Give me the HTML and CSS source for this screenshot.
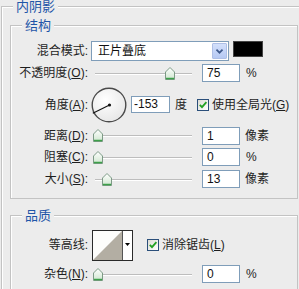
FILE: index.html
```html
<!DOCTYPE html>
<html>
<head>
<meta charset="utf-8">
<link rel="stylesheet" href="styles.css">
</head>
<body>
<div class="group outer">
  <div class="gtitle"><span>内阴影</span></div>

  <div class="group inner struct">
    <div class="gtitle"><span>结构</span></div>
    <div class="rows">
      <div class="row r-blend">
        <div class="lbl"><span>混合模式:</span></div>
        <div class="select">
          <span class="sel-text">正片叠底</span>
          <span class="sel-btn"><svg width="15" height="18" viewBox="0 0 15 18"><polyline points="4,7.5 7.5,11 11,7.5" fill="none" stroke="#3f5a8c" stroke-width="2"/></svg></span>
        </div>
        <div class="swatch"></div>
      </div>

      <div class="row r-std">
        <div class="lbl"><span>不透明度(<u>O</u>):</span></div>
        <div class="slider"><div class="track"></div><svg class="thumb" style="left:70px" width="10" height="13" viewBox="0 0 10 13"><defs><linearGradient id="tg1" x1="0" y1="0" x2="0" y2="1"><stop offset="0" stop-color="#ffffff"/><stop offset="1" stop-color="#cfe6cf"/></linearGradient></defs><path d="M5 0.5 L9.5 5 V12.5 H0.5 V5 Z" fill="url(#tg1)" stroke="#7d9a86"/><line x1="1" y1="11.5" x2="9" y2="11.5" stroke="#3da04a" stroke-width="1.5"/></svg></div>
        <div class="num">75</div>
        <div class="unit">%</div>
      </div>

      <div class="row r-angle">
        <div class="lbl"><span>角度(<u>A</u>):</span></div>
        <svg class="dial" width="36" height="36" viewBox="0 0 36 36"><defs><radialGradient id="dg" cx="0.4" cy="0.35" r="0.7"><stop offset="0" stop-color="#ffffff"/><stop offset="1" stop-color="#e6e6e6"/></radialGradient></defs><circle cx="18" cy="18" r="16.8" fill="url(#dg)" stroke="#4a4a4a" stroke-width="1.4"/><line x1="18.5" y1="18" x2="1.8" y2="26.2" stroke="#111" stroke-width="1.1"/><circle cx="18.5" cy="18" r="1.6" fill="#111"/></svg>
        <div class="num num-angle">-153</div>
        <div class="unit unit-deg">度</div>
        <span class="cb"><svg width="10" height="10" viewBox="0 0 10 10"><polyline points="1.8,4.8 4,7.2 8.4,2.2" fill="none" stroke="#22a022" stroke-width="1.8"/></svg></span>
        <span class="cb-text">使用全局光(<u>G</u>)</span>
      </div>

      <div class="row r-dist">
        <div class="lbl"><span>距离(<u>D</u>):</span></div>
        <div class="slider"><div class="track"></div><svg class="thumb" style="left:-2px" width="10" height="13" viewBox="0 0 10 13"><defs><linearGradient id="tg2" x1="0" y1="0" x2="0" y2="1"><stop offset="0" stop-color="#ffffff"/><stop offset="1" stop-color="#cfe6cf"/></linearGradient></defs><path d="M5 0.5 L9.5 5 V12.5 H0.5 V5 Z" fill="url(#tg2)" stroke="#7d9a86"/><line x1="1" y1="11.5" x2="9" y2="11.5" stroke="#3da04a" stroke-width="1.5"/></svg></div>
        <div class="num">1</div>
        <div class="unit unit-px">像素</div>
      </div>

      <div class="row r-std">
        <div class="lbl"><span>阻塞(<u>C</u>):</span></div>
        <div class="slider"><div class="track"></div><svg class="thumb" style="left:-2px" width="10" height="13" viewBox="0 0 10 13"><defs><linearGradient id="tg3" x1="0" y1="0" x2="0" y2="1"><stop offset="0" stop-color="#ffffff"/><stop offset="1" stop-color="#cfe6cf"/></linearGradient></defs><path d="M5 0.5 L9.5 5 V12.5 H0.5 V5 Z" fill="url(#tg3)" stroke="#7d9a86"/><line x1="1" y1="11.5" x2="9" y2="11.5" stroke="#3da04a" stroke-width="1.5"/></svg></div>
        <div class="num">0</div>
        <div class="unit">%</div>
      </div>

      <div class="row r-std">
        <div class="lbl"><span>大小(<u>S</u>):</span></div>
        <div class="slider"><div class="track"></div><svg class="thumb" style="left:7px" width="10" height="13" viewBox="0 0 10 13"><defs><linearGradient id="tg4" x1="0" y1="0" x2="0" y2="1"><stop offset="0" stop-color="#ffffff"/><stop offset="1" stop-color="#cfe6cf"/></linearGradient></defs><path d="M5 0.5 L9.5 5 V12.5 H0.5 V5 Z" fill="url(#tg4)" stroke="#7d9a86"/><line x1="1" y1="11.5" x2="9" y2="11.5" stroke="#3da04a" stroke-width="1.5"/></svg></div>
        <div class="num">13</div>
        <div class="unit unit-px">像素</div>
      </div>
    </div>
  </div>

  <div class="group inner quality">
    <div class="gtitle"><span>品质</span></div>
    <div class="rows rows-q">
      <div class="row r-contour">
        <div class="lbl"><span>等高线:</span></div>
        <div class="contour">
          <svg class="cswatch" width="29" height="29" viewBox="0 0 29 29"><rect x="0" y="0" width="29" height="29" fill="#fdfdfb"/><polygon points="0,29 29,0 29,29" fill="#b3aea3"/></svg>
          <span class="cbtn"><svg width="9" height="29" viewBox="0 0 9 29"><polygon points="2,12 7,12 4.5,15" fill="#000"/></svg></span>
        </div>
        <span class="cb cb-q"><svg width="10" height="10" viewBox="0 0 10 10"><polyline points="1.8,4.8 4,7.2 8.4,2.2" fill="none" stroke="#22a022" stroke-width="1.8"/></svg></span>
        <span class="cb-text">消除锯齿(<u>L</u>)</span>
      </div>

      <div class="row r-noise">
        <div class="lbl"><span>杂色(<u>N</u>):</span></div>
        <div class="slider"><div class="track"></div><svg class="thumb" style="left:-2px" width="10" height="13" viewBox="0 0 10 13"><defs><linearGradient id="tg5" x1="0" y1="0" x2="0" y2="1"><stop offset="0" stop-color="#ffffff"/><stop offset="1" stop-color="#cfe6cf"/></linearGradient></defs><path d="M5 0.5 L9.5 5 V12.5 H0.5 V5 Z" fill="url(#tg5)" stroke="#7d9a86"/><line x1="1" y1="11.5" x2="9" y2="11.5" stroke="#3da04a" stroke-width="1.5"/></svg></div>
        <div class="num">0</div>
        <div class="unit">%</div>
      </div>
    </div>
  </div>
</div>
</body>
</html>
```

FILE: styles.css
```css
html, body {
  margin: 0;
  padding: 0;
}
body {
  width: 299px;
  height: 289px;
  overflow: hidden;
  background: #ececec;
  font-family: "Liberation Sans", "Noto Sans CJK SC", sans-serif;
  font-size: 12px;
  line-height: 14px;
  color: #1e1e1e;
}

.group {
  border: 1px solid #c3c3c3;
  box-shadow: inset 1px 1px 0 #ffffff;
  box-sizing: border-box;
}
.outer {
  margin: 6px 0 0 1px;
  height: 283px;
  border-right: none;
  border-bottom: none;
}
.gtitle {
  height: 13px;
  margin-top: -7px;
  padding-left: 11px;
  font-size: 13px;
  line-height: 13px;
  color: #1f56a8;
}
.gtitle span {
  display: inline-block;
  height: 13px;
  padding: 0 3px;
  background: #ececec;
}
.inner {
  width: 288px;
  margin-left: 8px;
}
.struct {
  margin-top: 12px;
}
.quality {
  margin-top: 16px;
  height: 74px;
  border-bottom: none;
}

.rows {
  padding: 8px 0 8px 0;
}
.rows-q {
  padding: 6px 0 0 0;
}
.row {
  display: flex;
  align-items: center;
  height: 22px;
  white-space: nowrap;
}
.r-blend { align-items: flex-start; padding-top: 1px; box-sizing: border-box; }
.r-angle { height: 41px; }
.r-dist { height: 21px; }
.r-contour { height: 34px; }
.r-noise { height: 24px; }

.lbl {
  flex: none;
  width: 77px;
  display: flex;
  justify-content: flex-end;
  white-space: nowrap;
}
.r-blend .lbl { margin-top: 3px; }
u {
  text-decoration: underline;
  text-underline-offset: 1px;
}

.select {
  flex: none;
  display: flex;
  width: 138px;
  height: 20px;
  margin-left: 3px;
  box-sizing: border-box;
  border: 1px solid #7f9db9;
  background: #ffffff;
}
.sel-text {
  flex: 1;
  padding-left: 6px;
  line-height: 18px;
  color: #111;
}
.sel-btn {
  flex: none;
  width: 15px;
  height: 16px;
  margin: 1px 1px 0 0;
  display: flex;
  align-items: center;
  justify-content: center;
  background: linear-gradient(#d3e0fb, #b6c9f3);
  border: 1px solid #aebfe6;
  box-sizing: border-box;
  border-radius: 1px;
}
.sel-btn svg { display: block; }
.swatch {
  flex: none;
  width: 30px;
  height: 16px;
  margin-left: 4px;
  background: #000;
  box-sizing: border-box;
  border: 1px solid #444;
}

.slider {
  flex: none;
  position: relative;
  width: 97px;
  height: 13px;
  margin-left: 7px;
  display: flex;
  align-items: center;
}
.track {
  flex: 1;
  height: 2px;
  box-sizing: border-box;
  border-top: 1px solid #bdbdbd;
  border-bottom: 1px solid #ffffff;
  margin-top: 1px;
}
.thumb {
  position: absolute;
  top: 0;
  display: block;
}

.num {
  flex: none;
  width: 38px;
  height: 18px;
  margin-left: 10px;
  box-sizing: border-box;
  border: 1px solid #7f9db9;
  background: #ffffff;
  padding-left: 4px;
  line-height: 16px;
  color: #111;
}
.num-angle {
  width: 39px;
  height: 17px;
  line-height: 15px;
  margin-left: 4px;
  padding-left: 2px;
}
.unit {
  flex: none;
  margin-left: 6px;
}
.unit-px { margin-left: 5px; }
.unit-deg { margin-left: 5px; }

.dial {
  flex: none;
  display: block;
  margin-left: 3px;
}

.cb {
  flex: none;
  width: 12px;
  height: 12px;
  margin-left: 10px;
  box-sizing: border-box;
  border: 1px solid #2b4f7a;
  background: linear-gradient(135deg, #dcdcd4, #ffffff);
  display: flex;
  align-items: center;
  justify-content: center;
}
.cb svg { display: block; }
.cb-text {
  flex: none;
  margin-left: 3px;
}
.cb-q { margin-left: 14px; }

.contour {
  flex: none;
  display: flex;
  width: 41px;
  height: 31px;
  margin-left: 4px;
  box-sizing: border-box;
  border: 1px solid #2a2a2a;
  background: #ffffff;
}
.cswatch {
  display: block;
  flex: none;
  border-right: 1px solid #555;
}
.cbtn {
  flex: 1;
  display: flex;
  justify-content: center;
}
.cbtn svg { display: block; }
```
